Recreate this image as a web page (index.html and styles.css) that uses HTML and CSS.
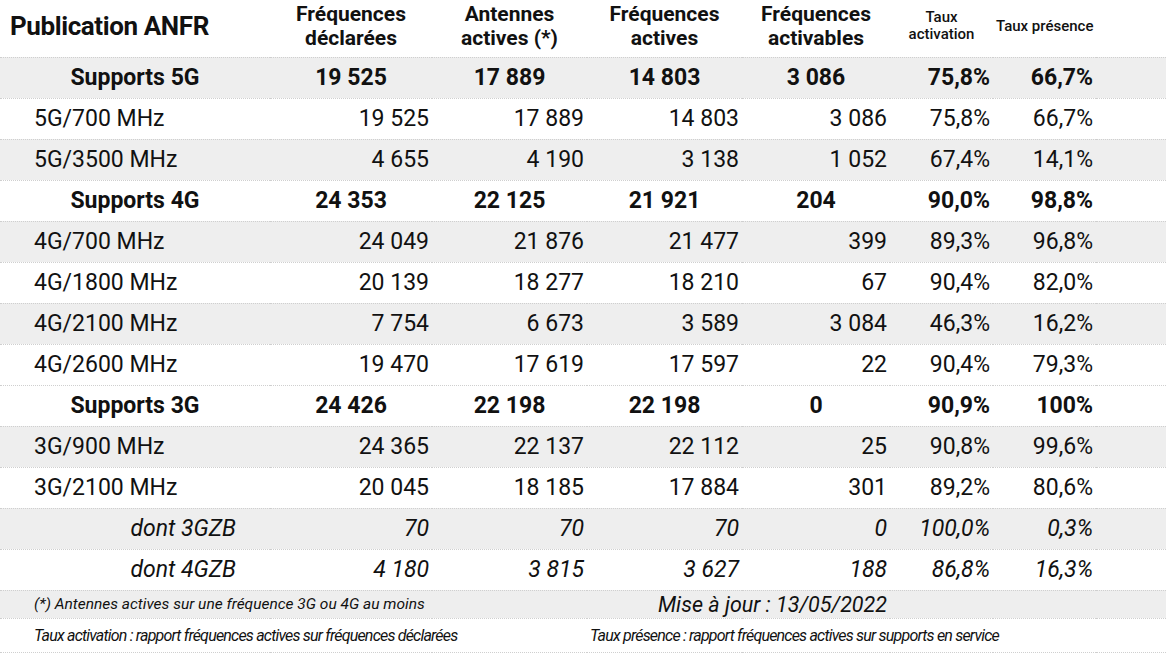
FILE: index.html
```html
<!DOCTYPE html>
<html lang="fr">
<head>
<meta charset="utf-8">
<title>Publication ANFR</title>
<link rel="stylesheet" href="styles.css">
</head>
<body>
<table class="anfr">
  <colgroup>
    <col class="c1"><col class="c2"><col class="c3"><col class="c4"><col class="c5"><col class="c6"><col class="c7"><col class="c8">
  </colgroup>
  <thead>
    <tr class="head">
      <th class="title">Publication ANFR</th>
      <th class="hcol">Fréquences<br>déclarées</th>
      <th class="hcol">Antennes<br>actives (*)</th>
      <th class="hcol">Fréquences<br>actives</th>
      <th class="hcol">Fréquences<br>activables</th>
      <th class="hsmall">Taux<br>activation</th>
      <th class="hsmall">Taux présence</th>
      <th></th>
    </tr>
  </thead>
  <tbody>
    <tr class="sum grey"><td>Supports 5G</td><td>19 525</td><td>17 889</td><td>14 803</td><td>3 086</td><td>75,8%</td><td>66,7%</td><td></td></tr>
    <tr class="row"><td>5G/700 MHz</td><td>19 525</td><td>17 889</td><td>14 803</td><td>3 086</td><td>75,8%</td><td>66,7%</td><td></td></tr>
    <tr class="row grey"><td>5G/3500 MHz</td><td>4 655</td><td>4 190</td><td>3 138</td><td>1 052</td><td>67,4%</td><td>14,1%</td><td></td></tr>
    <tr class="sum"><td>Supports 4G</td><td>24 353</td><td>22 125</td><td>21 921</td><td>204</td><td>90,0%</td><td>98,8%</td><td></td></tr>
    <tr class="row grey"><td>4G/700 MHz</td><td>24 049</td><td>21 876</td><td>21 477</td><td>399</td><td>89,3%</td><td>96,8%</td><td></td></tr>
    <tr class="row"><td>4G/1800 MHz</td><td>20 139</td><td>18 277</td><td>18 210</td><td>67</td><td>90,4%</td><td>82,0%</td><td></td></tr>
    <tr class="row grey"><td>4G/2100 MHz</td><td>7 754</td><td>6 673</td><td>3 589</td><td>3 084</td><td>46,3%</td><td>16,2%</td><td></td></tr>
    <tr class="row"><td>4G/2600 MHz</td><td>19 470</td><td>17 619</td><td>17 597</td><td>22</td><td>90,4%</td><td>79,3%</td><td></td></tr>
    <tr class="sum"><td>Supports 3G</td><td>24 426</td><td>22 198</td><td>22 198</td><td>0</td><td>90,9%</td><td>100%</td><td></td></tr>
    <tr class="row grey"><td>3G/900 MHz</td><td>24 365</td><td>22 137</td><td>22 112</td><td>25</td><td>90,8%</td><td>99,6%</td><td></td></tr>
    <tr class="row"><td>3G/2100 MHz</td><td>20 045</td><td>18 185</td><td>17 884</td><td>301</td><td>89,2%</td><td>80,6%</td><td></td></tr>
    <tr class="sub grey"><td>dont 3GZB</td><td>70</td><td>70</td><td>70</td><td>0</td><td>100,0%</td><td>0,3%</td><td></td></tr>
    <tr class="sub"><td>dont 4GZB</td><td>4 180</td><td>3 815</td><td>3 627</td><td>188</td><td>86,8%</td><td>16,3%</td><td></td></tr>
    <tr class="note grey">
      <td colspan="3" class="note-l">(*) Antennes actives sur une fréquence 3G ou 4G au moins</td>
      <td colspan="2" class="note-r">Mise à jour : 13/05/2022</td>
      <td colspan="3"></td>
    </tr>
    <tr class="legend">
      <td colspan="3" class="leg-l">Taux activation : rapport fréquences actives sur fréquences déclarées</td>
      <td colspan="5" class="leg-r">Taux présence : rapport fréquences actives sur supports en service</td>
    </tr>
  </tbody>
</table>
</body>
</html>
```

FILE: styles.css
```css
html, body {
  margin: 0;
  padding: 0;
  background: #ffffff;
}

body {
  font-family: Roboto, "Liberation Sans", sans-serif;
  color: #111111;
}

.anfr {
  width: 1166px;
  table-layout: fixed;
  border-collapse: collapse;
}

.c1 { width: 270px; }
.c2 { width: 162px; }
.c3 { width: 155px; }
.c4 { width: 155px; }
.c5 { width: 148px; }
.c6 { width: 103px; }
.c7 { width: 103px; }
.c8 { width: 70px; }

.anfr td, .anfr th {
  padding: 0 3px;
  white-space: nowrap;
  vertical-align: middle;
}

.anfr .head th {
  height: 57px;
  box-sizing: border-box;
  padding-bottom: 4px;
  font-weight: 700;
  text-align: center;
}

.anfr .head .title {
  text-align: left;
  padding-left: 10px;
  font-size: 26px;
  letter-spacing: -0.4px;
}

.anfr .head .hcol {
  font-size: 21px;
  line-height: 24px;
}

.anfr .head .hsmall {
  font-size: 15px;
  line-height: 17px;
  font-weight: 500;
}

.anfr tbody tr {
  height: 41px;
}

.anfr tbody td {
  border-bottom: 1px dotted #cfcfcf;
  font-size: 23px;
  text-align: right;
}

.anfr tbody tr:first-child td {
  border-top: 1px dotted #cfcfcf;
}

.anfr .grey td {
  background: #eeeeee;
}

.anfr .row td:first-child {
  text-align: left;
  padding-left: 34px;
}

.anfr .sum td {
  font-weight: 700;
  text-align: center;
}

.anfr .sum td:nth-child(6),
.anfr .sum td:nth-child(7) {
  text-align: right;
}

.anfr .sub td {
  font-style: italic;
}

.anfr .sub td:first-child {
  padding-right: 34px;
}

.anfr tbody tr.note {
  height: 28px;
}

.anfr .note td {
  font-style: italic;
}

.anfr .note .note-l {
  text-align: left;
  padding-left: 34px;
  font-size: 15.5px;
}

.anfr .note .note-r {
  text-align: right;
  font-size: 21.5px;
}

.anfr tbody tr.legend {
  height: 34px;
}

.anfr .legend td {
  font-style: italic;
  font-size: 16px;
  text-align: left;
  letter-spacing: -0.8px;
}

.anfr .legend .leg-l {
  padding-left: 34px;
}
```
